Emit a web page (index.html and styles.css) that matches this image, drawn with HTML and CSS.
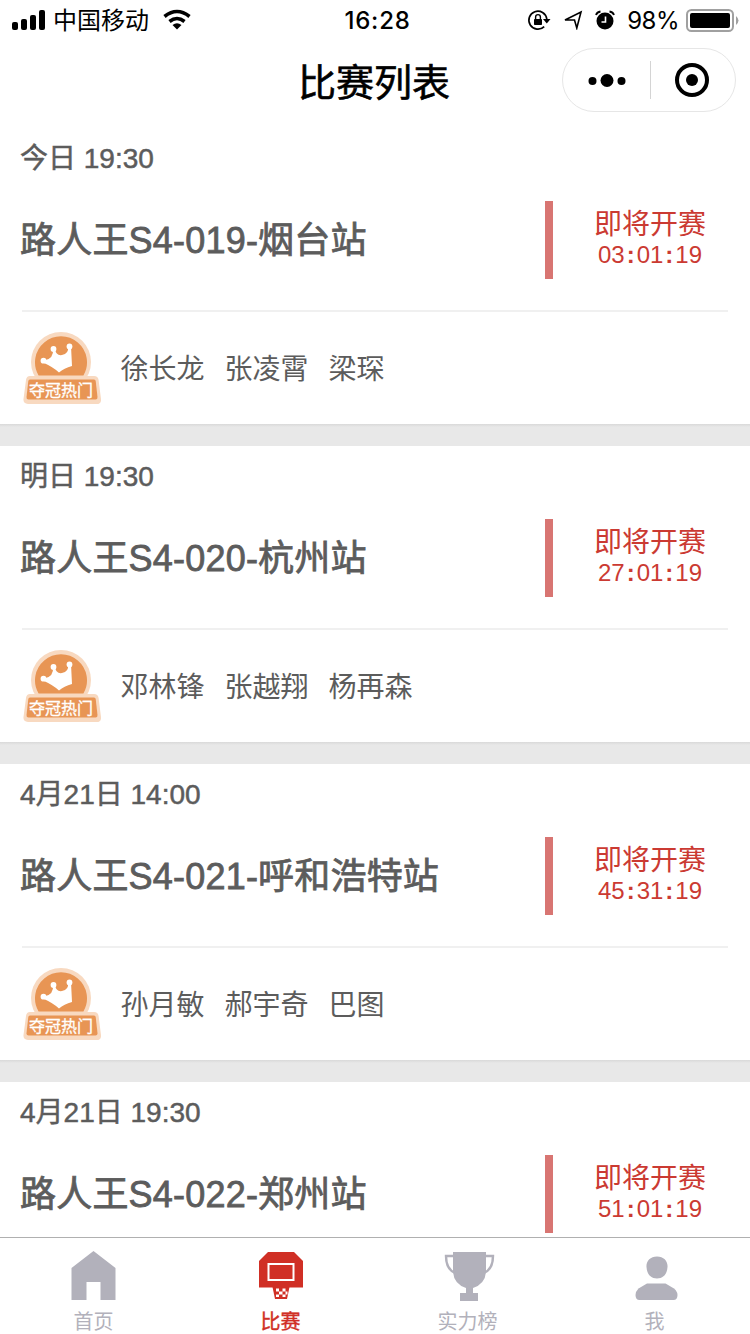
FILE: index.html
```html
<!DOCTYPE html>
<html lang="zh-CN">
<head>
  <meta charset="UTF-8">
  <meta name="viewport" content="width=device-width, initial-scale=1.0">
  <title>比赛列表</title>
  <link rel="stylesheet" href="styles.css">
</head>
<body>

  <svg class="defs" width="0" height="0">
    <symbol id="badge" viewBox="0 0 78 74">
      <circle cx="38" cy="31" r="30" fill="#f8d9c0"/>
      <path d="M7 45h64q4 0 4.600 4l2.400 19q.500 5-4.500 5H5q-5 0-4.500-5L3 49q.500-4 4-4z" fill="#f8d9c0"/>
      <path d="M15.600 44.500a26 26 0 1 1 44.800 0z" fill="#e89554"/>
      <path d="M7 48.500h64q1.500 0 1.700 1.500l1.800 16q.200 2.500-2 2.500h-67q-2.200 0-2-2.500l1.800-16q.200-1.500 1.700-1.500z" fill="#e89554"/>
      <path d="M21 29.500Q31 28 30 18h2Q33 25 39 24 46 23 45 15h3L49 35Q41 37 36 41.500 30 36 21 32z" fill="#fff"/>
      <circle cx="20.500" cy="29.700" r="2.900" fill="#fff"/>
      <circle cx="30.500" cy="18" r="2.900" fill="#fff"/>
      <circle cx="46.500" cy="15.500" r="2.900" fill="#fff"/>
    </symbol>
  </svg>

  <div class="status">
    <div class="status-left">
      <svg width="34" height="22" viewBox="0 0 34 22">
        <rect x="0" y="13" width="6" height="8" rx="2"/>
        <rect x="9" y="10" width="6" height="11" rx="2"/>
        <rect x="18" y="6" width="6" height="15" rx="2"/>
        <rect x="27" y="1" width="6" height="20" rx="2"/>
      </svg>
      <span class="carrier">中国移动</span>
      <svg width="28" height="22" viewBox="0 0 28 22">
        <path d="M1.500 7.500q12.500-10 25 0M6.500 12.500q7.500-6 15 0" fill="none" stroke="#000" stroke-width="3.600"/>
        <path d="M9.500 16q4.500-3.500 9 0L14 20.500z"/>
      </svg>
    </div>
    <span class="time">16:28</span>
    <div class="status-right">
      <svg class="ic-lock" width="24" height="22" viewBox="0 0 24 22">
        <path d="M17.200 17.600A9 9 0 1 1 19.800 10" fill="none" stroke="#000" stroke-width="1.700"/>
        <path d="M16 10h7.500l-3.700 4.500z"/>
        <rect x="7" y="10" width="8" height="6" rx=".8"/>
        <path d="M8.600 10.500V8a2.400 2.400 0 0 1 4.800 0v2.500" fill="none" stroke="#000" stroke-width="1.400"/>
      </svg>
      <svg class="ic-loc" width="20" height="20" viewBox="0 0 20 20">
        <path d="M2 10L18 2l-4.200 16-2.300-8z" fill="none" stroke="#000" stroke-width="1.600"/>
      </svg>
      <svg class="ic-alarm" width="20" height="20" viewBox="0 0 20 20">
        <circle cx="10" cy="11" r="8.500"/>
        <path d="M1 5Q2 2 5.500 1.500M19 5Q18 2 14.500 1.500" fill="none" stroke="#000" stroke-width="1.800"/>
        <path d="M10.500 6.500V12H6.500" fill="none" stroke="#fff" stroke-width="1.600"/>
      </svg>
      <span class="percent">98%</span>
      <svg class="ic-battery" width="54" height="24" viewBox="0 0 54 24">
        <rect x="1" y="2" width="46" height="21" rx="4.500" fill="none" stroke="#a0a0a0" stroke-width="2"/>
        <rect x="4" y="5" width="40" height="15" rx="2"/>
        <path d="M50 8q5 4.500 0 9z" fill="#a0a0a0"/>
      </svg>
    </div>
  </div>

  <div class="nav">
    <h1>比赛列表</h1>
    <div class="capsule">
      <svg width="40" height="16" viewBox="0 0 40 16">
        <circle cx="5.500" cy="9" r="4"/>
        <circle cx="20" cy="8.500" r="6.500"/>
        <circle cx="34.500" cy="9" r="4"/>
      </svg>
      <i class="capsule-line"></i>
      <svg width="36" height="36" viewBox="0 0 36 36">
        <circle cx="18" cy="18" r="15" fill="none" stroke="#000" stroke-width="4"/>
        <circle cx="18" cy="18" r="6"/>
      </svg>
    </div>
  </div>

  <div class="list">
    <div class="card">
      <div class="date">今日 19:30</div>
      <div class="main">
        <h2>路人王S4-019-烟台站</h2>
        <div class="state">
          <p>即将开赛</p>
          <p class="count">03<b>:</b>01<b>:</b>19</p>
        </div>
      </div>
      <div class="hot">
        <div class="badge"><svg><use href="#badge"/></svg><em>夺冠热门</em></div>
        <span>徐长龙</span><span>张凌霄</span><span>梁琛</span>
      </div>
    </div>

    <div class="card">
      <div class="date">明日 19:30</div>
      <div class="main">
        <h2>路人王S4-020-杭州站</h2>
        <div class="state">
          <p>即将开赛</p>
          <p class="count">27<b>:</b>01<b>:</b>19</p>
        </div>
      </div>
      <div class="hot">
        <div class="badge"><svg><use href="#badge"/></svg><em>夺冠热门</em></div>
        <span>邓林锋</span><span>张越翔</span><span>杨再森</span>
      </div>
    </div>

    <div class="card">
      <div class="date">4月21日 14:00</div>
      <div class="main">
        <h2>路人王S4-021-呼和浩特站</h2>
        <div class="state">
          <p>即将开赛</p>
          <p class="count">45<b>:</b>31<b>:</b>19</p>
        </div>
      </div>
      <div class="hot">
        <div class="badge"><svg><use href="#badge"/></svg><em>夺冠热门</em></div>
        <span>孙月敏</span><span>郝宇奇</span><span>巴图</span>
      </div>
    </div>

    <div class="card">
      <div class="date">4月21日 19:30</div>
      <div class="main">
        <h2>路人王S4-022-郑州站</h2>
        <div class="state">
          <p>即将开赛</p>
          <p class="count">51<b>:</b>01<b>:</b>19</p>
        </div>
      </div>
    </div>
  </div>

  <div class="tabbar">
    <a class="tab">
      <svg width="54" height="54" viewBox="0 0 54 54">
        <path d="M26.500 2l22 17v32h-15V33h-14v18h-15V19z"/>
      </svg>
      <span>首页</span>
    </a>
    <a class="tab active">
      <svg width="54" height="54" viewBox="0 0 54 54">
        <path d="M14 3h26l9 9v26.500H5V12z"/>
        <rect x="14.500" y="15" width="25" height="16" fill="none" stroke="#fff" stroke-width="2"/>
        <path d="M18.500 38h17L33 50H21z"/>
        <path d="M22 39.500h3v3h-3zM28.500 39.500h3v3h-3zM25 42.500h3.500v3H25zM22 45.500h3V48h-3zM28.500 45.500h3V48h-3zM31.500 42.500h2v3h-2z" fill="#fff"/>
      </svg>
      <span>比赛</span>
    </a>
    <a class="tab">
      <svg width="54" height="54" viewBox="0 0 54 54">
        <path d="M12 3h33v20q-1 12-13 16v5h5v8H19v-8h6v-5Q13 35 12 23z"/>
        <path d="M13 7H5q0 13 9 17M44 7h8q0 13-9 17" fill="none" stroke="#b2b1bb" stroke-width="2.400"/>
      </svg>
      <span>实力榜</span>
    </a>
    <a class="tab">
      <svg width="54" height="54" viewBox="0 0 54 54">
        <path d="M29 7.500c7 0 11 5 10.500 10.500C39 25.500 35 29.500 29 29.500s-10-4-10.500-11.500C18 12.500 22 7.500 29 7.500z"/>
        <path d="M19 34.500h18.500L46 39.500q3.500 3 3.500 6.500 0 5-4 5H11.500q-4 0-4-5 0-3.500 3-6.500z"/>
      </svg>
      <span>我</span>
    </a>
  </div>

</body>
</html>
```
FILE: styles.css
```css
* {
  margin: 0;
  padding: 0;
  box-sizing: border-box;
}

body {
  width: 750px;
  height: 1334px;
  display: flex;
  flex-direction: column;
  overflow: hidden;
  background: #fff;
  color: #5c5c5c;
  font-family: "Liberation Sans", "Noto Sans CJK SC", sans-serif;
}

svg {
  display: block;
  flex-shrink: 0;
}

.defs {
  position: absolute;
}

/* 状态栏 */
.status {
  height: 40px;
  display: grid;
  grid-template-columns: 1fr auto 1fr;
  align-items: center;
  padding: 0 10px 0 12px;
  color: #000;
}

.status-left, .status-right {
  display: flex;
  align-items: center;
}

.status-right {
  justify-content: flex-end;
}

.carrier {
  margin: 0 14px 0 7px;
  padding-top: 2px;
  font-size: 24px;
  line-height: 38px;
}

.time, .percent {
  padding-top: 2px;
  font-family: Inter, sans-serif;
  font-size: 24px;
  line-height: 38px;
}

.time {
  padding-left: 3px;
  font-weight: 500;
  letter-spacing: 0.8px;
}

.ic-loc {
  margin-left: 12px;
}

.ic-alarm {
  margin: 0 12px 0 12px;
}

.percent {
  letter-spacing: -0.5px;
}

.ic-battery {
  margin-left: 7px;
}

/* 导航栏 */
.nav {
  height: 88px;
  display: grid;
  grid-template-columns: 1fr auto 1fr;
  align-items: start;
  padding: 8px 14px 0;
}

.nav h1 {
  grid-column: 2;
  padding-right: 2px;
  font-size: 38px;
  font-weight: 400;
  line-height: 70px;
  color: #000;
  -webkit-text-stroke: 0.6px #000;
}

.capsule {
  justify-self: end;
  width: 174px;
  height: 64px;
  display: flex;
  align-items: center;
  justify-content: space-between;
  padding: 0 25px 0 24px;
  border: 1px solid #e6e6e6;
  border-radius: 32px;
}

.capsule-line {
  width: 1px;
  height: 38px;
  background: #d4d4d4;
}

/* 比赛列表 */
.list {
  flex: 1;
  min-height: 0;
  overflow: hidden;
}

.card {
  height: 318px;
  padding-bottom: 22px;
  background: linear-gradient(#d9d9d9, #e8e8e8 3px) bottom / 100% 22px no-repeat;
}

.date {
  height: 60px;
  padding-left: 20px;
  font-size: 28px;
  line-height: 62px;
  -webkit-text-stroke: 0.5px #5c5c5c;
}

.main {
  height: 104px;
  display: flex;
  align-items: center;
  justify-content: space-between;
  padding: 0 0 0 20px;
}

.main h2 {
  padding-bottom: 6px;
  font-size: 36px;
  font-weight: 400;
  letter-spacing: 0.2px;
  -webkit-text-stroke: 0.8px #5c5c5c;
}

.state {
  width: 205px;
  height: 78px;
  padding: 7px 3px 0 0;
  border-left: 8px solid #d87572;
  text-align: center;
  font-size: 28px;
  line-height: 34px;
  color: #cb3a32;
}

.state .count {
  font-size: 24px;
  line-height: 26px;
}

.count b {
  padding: 0 2px;
}

.hot {
  height: 114px;
  margin: 18px 22px 0;
  display: flex;
  align-items: center;
  border-top: 2px solid #f0f0f0;
  font-size: 28px;
}

.hot > span {
  margin-right: 20px;
  padding-bottom: 2px;
}

.badge {
  position: relative;
  margin: 0 19.5px 0 1px;
}

.badge svg {
  width: 78px;
  height: 74px;
}

.badge em {
  position: absolute;
  left: 6px;
  bottom: 3px;
  font-size: 16px;
  font-style: normal;
  line-height: 22px;
  white-space: nowrap;
  color: #fff;
  -webkit-text-stroke: 0.3px #fff;
}

/* 底部标签 */
.tabbar {
  height: 97px;
  display: flex;
  padding-right: 2px;
  border-top: 1px solid #b0b0b0;
  background: #fff;
}

.tab {
  flex: 1;
  display: flex;
  flex-direction: column;
  align-items: center;
  padding-top: 11px;
  font-size: 20px;
  line-height: 39px;
  color: #b2b1bb;
  fill: #b2b1bb;
}

.tab.active {
  color: #d02f25;
  fill: #d02f25;
  -webkit-text-stroke: 0.4px #d02f25;
}
```
